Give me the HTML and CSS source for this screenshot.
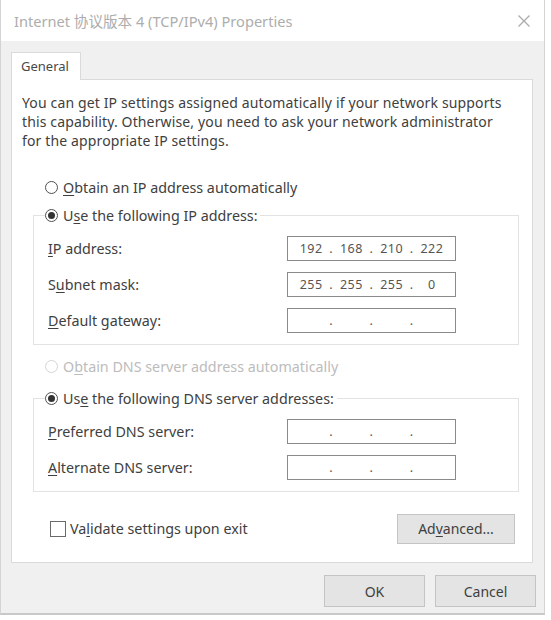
FILE: index.html
```html
<!DOCTYPE html>
<html lang="en">
<head>
<meta charset="utf-8">
<title>Internet 协议版本 4 (TCP/IPv4) Properties</title>
<link rel="stylesheet" href="styles.css">
</head>
<body>
<div class="window">
  <div class="titlebar">
    <span class="title">Internet 协议版本 4 (TCP/IPv4) Properties</span>
    <svg class="close" width="14" height="14" viewBox="0 0 14 14"><path d="M1.5 1.5L12.5 12.5M12.5 1.5L1.5 12.5"/></svg>
  </div>
  <div class="body">
    <div class="tab">General</div>
    <div class="panel">
      <p class="intro">You can get IP settings assigned automatically if your network supports<br>this capability. Otherwise, you need to ask your network administrator<br>for the appropriate IP settings.</p>

      <div class="option standalone"><span class="radio"></span><span><u>O</u>btain an IP address automatically</span></div>

      <fieldset class="group">
        <legend class="option"><span class="radio checked"></span><span>U<u>s</u>e the following IP address:</span></legend>
        <div class="field-row">
          <span class="label"><u>I</u>P address:</span>
          <div class="ipbox"><span class="seg">192</span><span class="dot">.</span><span class="seg">168</span><span class="dot">.</span><span class="seg">210</span><span class="dot">.</span><span class="seg">222</span></div>
        </div>
        <div class="field-row">
          <span class="label">S<u>u</u>bnet mask:</span>
          <div class="ipbox"><span class="seg">255</span><span class="dot">.</span><span class="seg">255</span><span class="dot">.</span><span class="seg">255</span><span class="dot">.</span><span class="seg">0</span></div>
        </div>
        <div class="field-row">
          <span class="label"><u>D</u>efault gateway:</span>
          <div class="ipbox"><span class="seg"></span><span class="dot">.</span><span class="seg"></span><span class="dot">.</span><span class="seg"></span><span class="dot">.</span><span class="seg"></span></div>
        </div>
      </fieldset>

      <div class="option standalone disabled"><span class="radio"></span><span>O<u>b</u>tain DNS server address automatically</span></div>

      <fieldset class="group">
        <legend class="option"><span class="radio checked"></span><span>Us<u>e</u> the following DNS server addresses:</span></legend>
        <div class="field-row">
          <span class="label"><u>P</u>referred DNS server:</span>
          <div class="ipbox"><span class="seg"></span><span class="dot">.</span><span class="seg"></span><span class="dot">.</span><span class="seg"></span><span class="dot">.</span><span class="seg"></span></div>
        </div>
        <div class="field-row">
          <span class="label"><u>A</u>lternate DNS server:</span>
          <div class="ipbox"><span class="seg"></span><span class="dot">.</span><span class="seg"></span><span class="dot">.</span><span class="seg"></span><span class="dot">.</span><span class="seg"></span></div>
        </div>
      </fieldset>

      <div class="footer-row">
        <div class="check"><span class="checkbox"></span><span>Va<u>l</u>idate settings upon exit</span></div>
        <button class="btn advanced">Ad<u>v</u>anced...</button>
      </div>
    </div>
    <div class="actions">
      <button class="btn action">OK</button>
      <button class="btn action">Cancel</button>
    </div>
  </div>
</div>
</body>
</html>
```

FILE: styles.css
```css
* { box-sizing: border-box; }

html, body {
  margin: 0;
  padding: 0;
  background: #ffffff;
}

body {
  font-family: "Noto Sans", "Open Sans", "Noto Sans CJK SC", sans-serif;
  font-size: 14.3px;
  color: #404040;
}

u { text-decoration-thickness: 1px; text-underline-offset: 2px; }

.window {
  width: 545px;
  height: 615px;
  border-left: 1px solid #d4d4d4;
  border-right: 1px solid #d4d4d4;
  border-bottom: 2px solid #c8c8c8;
  background: #ffffff;
  display: flex;
  flex-direction: column;
}

.titlebar {
  height: 41px;
  flex: none;
  display: flex;
  align-items: center;
  justify-content: space-between;
  padding: 0 13px 0 13px;
}

.title {
  font-family: "Noto Sans", "Noto Sans CJK SC", sans-serif;
  font-size: 14.6px;
  color: #adadad;
}

.close {
  display: block;
  fill: none;
  stroke: #ababab;
  stroke-width: 1.3;
}

.body {
  flex: 1;
  background: #f0f0f0;
  padding: 11px 11px 0 10px;
  display: flex;
  flex-direction: column;
}

.tab {
  width: 70px;
  height: 28px;
  background: #ffffff;
  border: 1px solid #dadada;
  border-bottom: none;
  margin-bottom: -1px;
  position: relative;
  z-index: 1;
  padding: 4px 0 0 9px;
  font-size: 13px;
  color: #484848;
}

.panel {
  height: 484px;
  background: #ffffff;
  border: 1px solid #dadada;
  display: flex;
  flex-direction: column;
}

.intro {
  margin: 0;
  padding: 13px 0 0 10px;
  font-size: 14px;
  letter-spacing: 0.14px;
  line-height: 19.2px;
}

.option {
  display: flex;
  align-items: center;
  height: 20px;
  gap: 5px;
}

.standalone {
  margin-left: 33px;
}

.intro + .standalone { margin-top: 27px; }

.radio {
  width: 13px;
  height: 13px;
  border: 1px solid #505050;
  border-radius: 50%;
  background: #fff;
  display: flex;
  align-items: center;
  justify-content: center;
  flex: none;
}

.radio.checked::after {
  content: "";
  width: 7px;
  height: 7px;
  border-radius: 50%;
  background: #333;
}

.disabled { color: #bcbcbc; }
.disabled .radio { border-color: #d4d4d4; }

.group {
  margin: 8px 0 0 21px;
  width: 486px;
  border: 1px solid #e2e2e2;
  padding: 0 14px 11px 14px;
}

.standalone.disabled { margin-top: 12px; }
.standalone.disabled + .group { margin-top: 12px; }

.group legend {
  padding: 0 3px 0 0;
  margin-left: -3px;
}

.field-row {
  display: flex;
  align-items: center;
  height: 25px;
  margin-top: 11px;
}

.group legend + .field-row { margin-top: 10px; }

.label {
  width: 239px;
  flex: none;
}

.ipbox {
  width: 169px;
  height: 25px;
  border: 1px solid #8a8a8a;
  display: flex;
  align-items: center;
  padding: 0 6px 0 6px;
  font-size: 12.5px;
  color: #555;
  letter-spacing: 0.5px;
}

.seg {
  flex: 1;
  text-align: center;
}

.dot {
  width: 6px;
  text-align: center;
}

.footer-row {
  display: flex;
  align-items: center;
  justify-content: space-between;
  margin: 22px 17px 0 38px;
  height: 30px;
}

.check {
  display: flex;
  align-items: center;
  gap: 4px;
}

.checkbox {
  width: 16px;
  height: 16px;
  border: 1px solid #6a6a6a;
  background: #fff;
}

.btn {
  font-family: inherit;
  font-size: 14px;
  color: #404040;
  background: #e4e4e4;
  border: 1px solid #c4c4c4;
  padding: 0;
}

.advanced {
  width: 118px;
  height: 30px;
}

.actions {
  display: flex;
  justify-content: flex-end;
  gap: 10px;
  margin: 12px -3px 0 0;
}

.action {
  width: 101px;
  height: 32px;
}
```
